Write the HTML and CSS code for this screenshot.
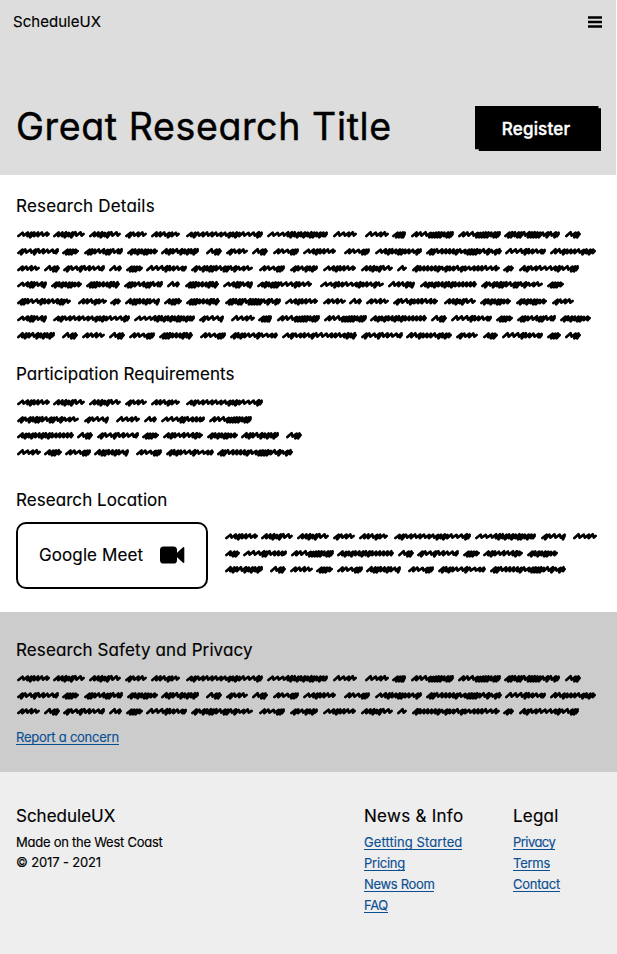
FILE: index.html
```html
<!DOCTYPE html>
<html lang="en">
<head>
<meta charset="utf-8">
<title>ScheduleUX</title>
<link rel="stylesheet" href="styles.css">
</head>
<body>
<header class="hero">
  <nav class="nav">
    <span class="brand">ScheduleUX</span>
    <svg class="menu" width="14" height="12" viewBox="0 0 14 12"><path d="M0 1.500h14M0 6h14M0 10.500h14" stroke="#000" stroke-width="2.300"/></svg>
  </nav>
  <div class="hero-row">
    <h1>Great Research Title</h1>
    <button class="register"><span>Register</span></button>
  </div>
</header>
<main>
  <section class="details">
    <h2 class="h-details">Research Details</h2>
    <div class="scribble" data-text="details"></div>
  </section>
  <section class="requirements">
    <h2 class="h-req">Participation Requirements</h2>
    <div class="scribble" data-text="requirements"></div>
  </section>
  <section class="location">
    <h2 class="h-loc">Research Location</h2>
    <div class="location-row">
      <div class="meet"><span>Google Meet</span>
        <svg width="25" height="18" viewBox="0 0 25 18"><rect x="0" y="0.5" width="17" height="17" rx="3.6"/><path d="M16.500 7.200 23 1.200Q24.300.500 24.300 2v14q0 1.500-1.300.800L16.500 10.800z"/></svg>
      </div>
      <div class="scribble" data-text="location"></div>
    </div>
  </section>
</main>
<section class="safety">
  <h2 class="h-safety">Research Safety and Privacy</h2>
  <div class="scribble" data-text="safety"></div>
  <a class="l-report" href="#">Report a concern</a>
</section>
<footer>
  <div class="about">
    <h2 class="h-brand">ScheduleUX</h2>
    <p class="made">Made on the West Coast</p>
    <p class="copy">© 2017 - 2021</p>
  </div>
  <div class="news">
    <h2 class="h-news">News &amp; Info</h2>
    <a class="l-start" href="#">Gettting Started</a>
    <a class="l-pricing" href="#">Pricing</a>
    <a class="l-room" href="#">News Room</a>
    <a class="l-faq" href="#">FAQ</a>
  </div>
  <div class="legal">
    <h2 class="h-legal">Legal</h2>
    <a class="l-privacy" href="#">Privacy</a>
    <a class="l-terms" href="#">Terms</a>
    <a class="l-contact" href="#">Contact</a>
  </div>
</footer>
<script src="scribble.js"></script>
</body>
</html>
```
FILE: styles.css
```css
* { box-sizing: border-box; }
body { margin: 0; background: #fff; color: #000; font-family: Inter, "Open Sans", sans-serif; font-feature-settings: "cv11" 1; -webkit-text-stroke: .15px; }
h1, h2, p { margin: 0; font-weight: 400; white-space: nowrap; }
h2 { font-size: 17px; line-height: 24px; }
.hero { height: 175px; margin-right: 1px; background: #ddd; }
.nav { height: 44px; padding: 0 14px 0 13px; display: flex; justify-content: space-between; align-items: center; }
.brand { font-size: 15px; margin-top: -2px; letter-spacing: .04px; }
.hero-row { display: flex; justify-content: space-between; margin-top: 62px; padding: 0 15px 0 16px; }
h1 { font-size: 37.500px; line-height: 42px; letter-spacing: .62px; -webkit-text-stroke: .45px; }
.register { width: 126px; height: 45px; border: 0; padding: 0 4px 0 0; background: #000; color: #fff; font: 500 17px/44px Inter, sans-serif; letter-spacing: .2px; -webkit-text-stroke: .4px; clip-path: polygon(0 0, 98% 0, 98% 5%, 100% 5%, 100% 100%, 3% 100%, 3% 96%, 0 96%); }
main { height: 437px; padding: 19px 16px 0; }
.details { height: 168px; }
.requirements { height: 126px; }
.scribble { display: flex; flex-direction: column; margin-top: 8px; }
.scribble svg { display: block; height: 16.8px; width: 100%; overflow: visible; }
.location-row { display: flex; margin-top: 10px; gap: 16px; }
.location-row .scribble { flex: 1; margin-top: 6px; }
.location-row .scribble svg, .requirements svg, .safety svg { height: 16.5px; }
.meet { width: 192px; height: 67px; border: 2px solid #000; border-radius: 10px; display: flex; align-items: center; padding-left: 21px; gap: 16px; font-size: 17px; white-space: nowrap; }
.meet span { width: 105px; letter-spacing: .1px; margin-top: -2px; }
.meet svg { margin-top: -1px; }
.safety { height: 160px; background: #ccc; padding: 26px 16px 0; }
footer { height: 182px; background: #eee; padding: 32px 16px 0; display: flex; }
a { display: block; width: max-content; height: 15px; color: #0b4f93; font-size: 13px; line-height: 15px; text-decoration: none; border-bottom: 1px solid #0b4f93; margin-bottom: 6px; }
.safety a { margin-top: 10px; }
.about { width: 348px; }
.news { width: 149px; }
.about p { font-size: 13px; line-height: 20px; }
footer h2 { margin-bottom: 7px; }
.about h2 { margin-bottom: 4px; }
.h-details { letter-spacing: .19px; }
.h-req { letter-spacing: .05px; }
.h-loc { letter-spacing: .06px; }
.h-safety { letter-spacing: .11px; }
.h-news { letter-spacing: .27px; }
.h-legal { letter-spacing: .2px; }
.l-report, .made, .l-pricing, .l-terms, .l-contact { letter-spacing: -.25px; }
.l-start { letter-spacing: .08px; }
.copy { letter-spacing: -.15px; }
.l-room, .l-faq { letter-spacing: -.33px; }
.l-privacy { letter-spacing: -.55px; }
```
FILE: scribble.js
```js
// Word extents per line, in pixels from the left edge of the paragraph.
const details = [
  "1-34 37-69 73-105 109-131 135-164 170-247 251-312 317-341 349-373 376-390 395-438 442-485 488-544 549-565",
  "1-43 46-63 68-107 111-142 145-183 190-206 210-232 236-252 257-283 287-320 328-354 359-406 410-486 489-530 534-580",
  "1-24 28-44 47-89 93-106 110-127 130-171 175-237 243-269 274-302 307-340 345-377 381-391 396-484 487-498 503-563",
  "1-31 35-66 70-104 108-147 151-164 169-203 207-237 241-296 304-368 372-399 404-461 465-527 531-548",
  "1-55 62-91 94-105 109-144 148-166 170-204 209-265 269-302 307-330 333-346 350-373 377-422 428-460 464-495 500-531 536-558",
  "1-31 37-114 118-179 183-208 215-239 242-256 261-304 308-351 354-411 415-431 435-476 480-497 501-540 544-575",
  "1-39 46-62 66-89 93-109 113-139 143-177 184-210 214-262 266-341 345-387 390-436 440-462 467-482 486-527 531-545 549-565"
];
const texts = {
  details,
  safety: details.slice(0, 3),
  requirements: [
    "1-34 37-69 73-105 109-131 135-164 170-247",
    "1-63 68-93 100-124 128-141 145-189 193-236",
    "1-58 61-77 81-123 126-143 147-187 191-222 225-263 270-286",
    "1-25 28-46 49-75 78-113 120-146 150-198 201-277"
  ],
  location: [
    "1-34 37-69 73-105 109-131 135-164 170-247 251-312 317-342 349-373",
    "1-16 19-63 67-110 113-170 174-190 193-235 239-256 259-299 303-334",
    "1-39 46-62 66-89 92-109 113-139 142-177 184-210 214-262 266-342"
  ]
};

// Alternates loose, wavy strokes with dense, low ones inside each word.
function word(a, b, seed) {
  let s = seed * 7919 + 13;
  const rnd = () => (s = (s * 16807) % 2147483647) / 2147483647;
  rnd();
  let x = a + 1.4;
  let d = `M${x} 10`;
  while (x < b - 4.5) {
    const r = rnd();
    const w = r < 0.3 ? 5.2 : r < 0.65 ? 3.8 : 2.7;
    const top = 6.2 + rnd() * 0.7;
    const low = r < 0.3 ? 9.6 : r < 0.65 ? 10.2 : 11.3;
    const nx = Math.min(x + w, b - 3);
    d += `L${Math.min(x + 4.2, b - 1.4).toFixed(1)} ${top.toFixed(1)}L${nx.toFixed(1)} ${low}`;
    x = nx;
  }
  return d + `L${b - 1.4} 8`;
}

document.querySelectorAll(".scribble").forEach(el => {
  const ns = "http://www.w3.org/2000/svg";
  texts[el.dataset.text].forEach(line => {
    const svg = document.createElementNS(ns, "svg");
    const path = document.createElementNS(ns, "path");
    path.setAttribute("d", line.split(" ").map(p => {
      const [a, b] = p.split("-").map(Number);
      return word(a, b, b - a);
    }).join(""));
    path.setAttribute("fill", "none");
    path.setAttribute("stroke", "#000");
    path.setAttribute("stroke-width", "2.7");
    path.setAttribute("stroke-linecap", "round");
    path.setAttribute("stroke-linejoin", "round");
    svg.append(path);
    el.append(svg);
  });
});
```
